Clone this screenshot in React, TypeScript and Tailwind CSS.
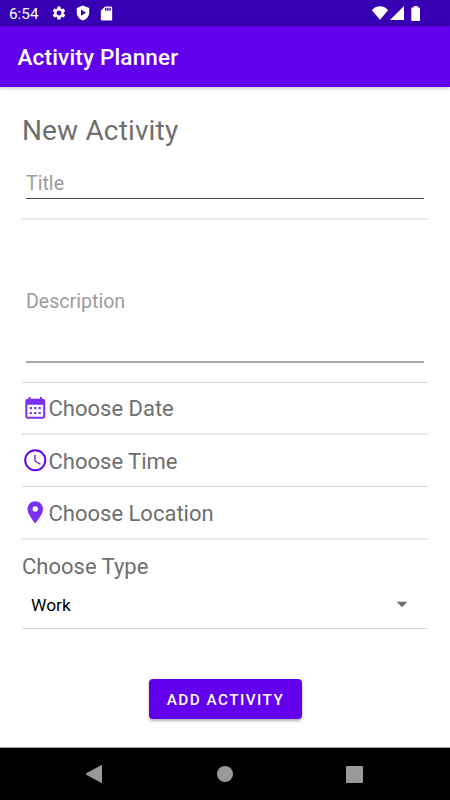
import React from 'react';
import { MdArrowDropDown, MdLocationOn, MdSdCard, MdSettings } from 'react-icons/md';

const StatusBar: React.FC = () => (
  <div className="flex h-[26px] items-center justify-between bg-[#3700b3] pl-[9px] pr-[30px] text-white">
    <div className="flex items-center">
      <span className="w-[41.5px] pt-px text-[15.3px] leading-6">6:54</span>
      <MdSettings className="h-4 w-4" />
      <svg className="ml-2 h-4 w-4" viewBox="0 0 16 16" fill="currentColor">
        <path fillRule="evenodd" d="M8 .5 14.2 3v4.8c0 3.4-2.5 6.5-6.2 7.7C4.3 14.3 1.8 11.2 1.8 7.8V3zM6 4.6v6.2l5-3.1z" />
      </svg>
      <MdSdCard className="ml-[7px] h-[17px] w-[17px]" />
    </div>
    <div className="flex items-center">
      <svg className="h-[14px] w-4" viewBox="0 0 16 14" fill="currentColor">
        <path d="M8 13.8.1 4.4Q0 4 .3 3.7C2.5 1.2 5.1.2 8 .2s5.5 1 7.7 3.5q.3.3.2.7z" />
      </svg>
      <svg className="ml-[1.5px] h-[14px] w-[14px]" viewBox="0 0 14 14" fill="currentColor">
        <path d="M0 14 14 0v14z" />
      </svg>
      <svg className="ml-[7px] h-[15px] w-[9.5px]" viewBox="0 0 9 15" fill="currentColor">
        <path d="M2.5 0h4v1.5H8q1 0 1 1V14q0 1-1 1H1q-1 0-1-1V2.5q0-1 1-1h1.5z" />
      </svg>
    </div>
  </div>
);

const CalendarIcon: React.FC = () => (
  <svg className="h-[26.5px] w-[26.5px] text-[#7b2ff2]" viewBox="0 0 24 24" fill="currentColor">
    <path
      fillRule="evenodd"
      d="M19 3.4h-1V1.8h-1.800v1.600H7.800V1.800H6v1.600H5c-1.100 0-2 .9-2 2V19.400c0 1.100.9 2 2 2h14c1.100 0 2-.9 2-2V5.400c0-1.100-.9-2-2-2zM19.200 19.700H4.800V8.900h14.400z"
    />
    <path d="M7 10.900h2v2H7zM11 10.900h2v2h-2zM15 10.900h2v2h-2zM7 15.300h2v2H7zM11 15.300h2v2h-2zM15 15.300h2v2h-2z" />
  </svg>
);

const ClockIcon: React.FC = () => (
  <svg className="mb-px h-[26.5px] w-[26.5px] text-[#6200ee]" viewBox="0 0 24 24" fill="none" stroke="currentColor">
    <circle cx="12" cy="12" r="9.1" strokeWidth="1.8" />
    <path d="M11.8 7v5.7l4.8 2.9" strokeWidth="1.1" />
  </svg>
);

interface PickerRowProps {
  icon: React.ReactNode;
  label: string;
  className: string;
}

const PickerRow: React.FC<PickerRowProps> = ({ icon, label, className }) => (
  <button className={`flex w-full items-center text-left text-[22px] ${className}`}>
    {icon}
    <span className="pt-px">{label}</span>
  </button>
);

const App: React.FC = () => {
  return (
    <div className="flex h-[800px] w-[450px] flex-col overflow-hidden bg-white font-['Roboto',sans-serif] text-[#6f6f6f]">
      <StatusBar />
      <header className="flex h-[61px] shrink-0 items-center bg-[#6200ee] pl-[17.5px] pt-[3px] shadow-[0_1px_4px_rgba(0,0,0,0.25)]">
        <h1 className="text-[22.5px] font-medium tracking-[0.17px] text-white">Activity Planner</h1>
      </header>

      <main className="flex flex-1 flex-col px-[22px] pt-[22px]">
        <h2 className="h-[42px] pt-px text-[28px] leading-[42px] tracking-[0.15px]">New Activity</h2>

        <div className="mx-1 mb-[19px] h-12 border-b border-[#484848] pt-[18px] text-[19.6px] leading-[30px] text-[#9c9c9c]">
          Title
        </div>
        <div className="h-0.5 bg-[#e8e8e8]" />

        <div className="mx-1 mb-[19px] h-[143px] border-b-2 border-[#a8a8a8] pt-[67px] text-[19.6px] leading-[30px] text-[#9c9c9c]">
          Description
        </div>
        <div className="h-px bg-[#d8d8d8]" />

        <PickerRow className="h-[50px]" icon={<CalendarIcon />} label="Choose Date" />
        <div className="h-0.5 bg-[#e8e8e8]" />
        <PickerRow className="h-[51px]" icon={<ClockIcon />} label="Choose Time" />
        <div className="h-px bg-[#d8d8d8]" />
        <PickerRow
          className="h-[51px] pt-px"
          icon={<MdLocationOn className="mb-0.5 h-[26.5px] w-[26.5px] text-[#7b2ff2]" />}
          label="Choose Location"
        />
        <div className="h-0.5 bg-[#e8e8e8]" />

        <div className="h-[52px] pt-px text-[22px] leading-[52px]">Choose Type</div>
        <div className="mb-[11px] flex h-[25px] items-center justify-between pl-[9px] pr-[13px]">
          <span className="pt-0.5 text-[17.4px] text-black">Work</span>
          <MdArrowDropDown className="mb-0.5 h-[26px] w-[26px] text-[#707070]" />
        </div>
        <div className="h-px bg-[#d8d8d8]" />

        <button className="mt-[50px] h-10 w-[153px] self-center rounded bg-[#6200ee] pl-px pt-0.5 text-[15.3px] font-medium tracking-[1.45px] text-white shadow-[0_2px_3px_rgba(0,0,0,0.3)]">
          ADD ACTIVITY
        </button>
      </main>

      <nav className="flex h-[53px] shrink-0 items-center justify-between border-t border-[#a0a0a0] bg-black pl-[86px] pr-[87px] text-[#999999]">
        <svg className="h-[18px] w-4" viewBox="0 0 16 18" fill="currentColor">
          <path d="M.3 8.3 15 .2q1-.4 1 .6v16.4q0 1-1 .6L.3 9.7q-.6-.7 0-1.4z" />
        </svg>
        <div className="ml-0.5 h-4 w-4 rounded-full bg-[#999999]" />
        <div className="h-[17px] w-[17px] rounded-[1px] bg-[#999999]" />
      </nav>
    </div>
  );
};

export default App;
